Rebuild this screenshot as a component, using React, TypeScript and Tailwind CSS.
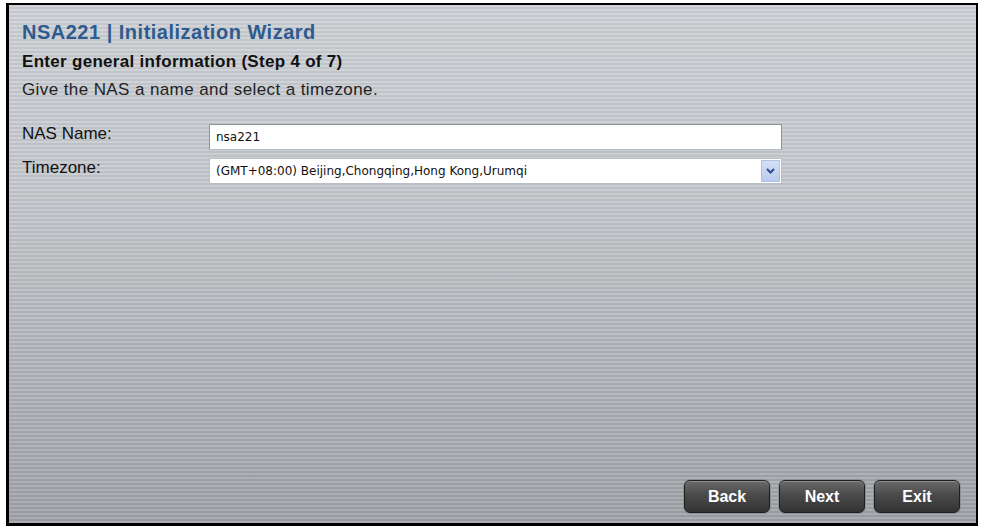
import React, { useState } from "react";

const timezones = [
  "(GMT+08:00) Beijing,Chongqing,Hong Kong,Urumqi",
  "(GMT+09:00) Osaka,Sapporo,Tokyo",
];

const WizardButton = ({ label }: { label: string }) => (
  <button className="w-[86px] h-[33px] rounded-[6px] border border-[#1f1f1f] bg-[linear-gradient(to_bottom,#6a6a6a,#4a4a4a_45%,#333333)] shadow-[0_0_0_1px_#8d9196,inset_0_1px_0_rgba(255,255,255,0.25)] text-white font-bold text-[16px] [font-family:'Liberation_Sans',Arial,sans-serif]">
    {label}
  </button>
);

const App = () => {
  const [name, setName] = useState("nsa221");
  const [zone, setZone] = useState(timezones[0]);

  return (
    <div className="w-[981px] h-[529px] bg-white pl-[6px] pt-[3px] [font-family:'Liberation_Sans',Arial,sans-serif]">
      <div className="w-[972px] h-[523px] border-black border-t-2 border-r-2 border-l-[3px] border-b-[3px] flex flex-col bg-[repeating-linear-gradient(to_bottom,rgba(255,255,255,0.12)_0px,rgba(255,255,255,0.12)_2px,rgba(0,0,0,0.04)_2px,rgba(0,0,0,0.04)_4px),linear-gradient(to_bottom,#ccd0d4,#c3c7cb_35%,#9da1a6)] px-[13px] pt-[14px] pb-[10px]">
        <h1 className="text-[20px] leading-[26px] font-bold tracking-[0.5px] text-[#2d5b8f]">
          NSA221 | Initialization Wizard
        </h1>
        <h2 className="mt-[7px] text-[17px] leading-[20px] font-bold tracking-[0.3px] text-[#111]">
          Enter general information (Step 4 of 7)
        </h2>
        <p className="mt-[8px] text-[17px] leading-[20px] tracking-[0.4px] text-[#222]">
          Give the NAS a name and select a timezone.
        </p>

        <div className="mt-[24px] flex flex-col gap-[8px]">
          <div className="flex items-start">
            <label className="w-[187px] text-[17px] leading-[20px] text-[#111]">NAS Name:</label>
            <input
              value={name}
              onChange={(e) => setName(e.target.value)}
              className="w-[573px] h-[26px] bg-white border border-[#8e949b] border-b-[#b7bcc2] px-[6px] text-[12px] text-[#111] outline-none [font-family:Tahoma,'DejaVu_Sans',sans-serif]"
            />
          </div>
          <div className="flex items-start">
            <label className="w-[187px] text-[17px] leading-[20px] text-[#111]">Timezone:</label>
            <div className="relative w-[573px] h-[26px] bg-white border border-[#b9bec4] flex items-center">
              <select
                value={zone}
                onChange={(e) => setZone(e.target.value)}
                className="appearance-none w-full h-full bg-transparent pl-[6px] pr-[26px] text-[12px] text-[#111] outline-none [font-family:Tahoma,'DejaVu_Sans',sans-serif]"
              >
                {timezones.map((t) => (
                  <option key={t}>{t}</option>
                ))}
              </select>
              <div className="pointer-events-none absolute right-[1px] top-[1px] bottom-[1px] w-[19px] bg-[linear-gradient(to_bottom,#d4e0f6,#b9cbee)] border border-[#b0c2e4] flex items-center justify-center">
                <svg width="9" height="6" viewBox="0 0 9 6">
                  <path d="M1 1 L4.5 4.5 L8 1" fill="none" stroke="#2c4c8c" strokeWidth="2" />
                </svg>
              </div>
            </div>
          </div>
        </div>

        <div className="mt-auto flex justify-end gap-[9px] pr-[3px]">
          <WizardButton label="Back" />
          <WizardButton label="Next" />
          <WizardButton label="Exit" />
        </div>
      </div>
    </div>
  );
};

export default App;
